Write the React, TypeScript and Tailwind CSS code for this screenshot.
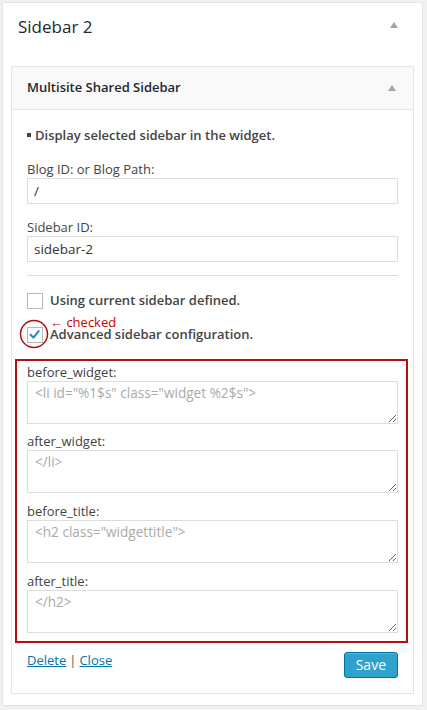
import React from 'react';

const font = { fontFamily: '"Open Sans", "Liberation Sans", sans-serif' };

const UpArrow: React.FC = () => (
  <svg width="8" height="6" viewBox="0 0 8 6" className="block">
    <polygon points="4,0 8,6 0,6" fill="#a0a5aa" />
  </svg>
);

const Field: React.FC<{ label: string; placeholder: string; gap: string }> = ({ label, placeholder, gap }) => (
  <div className={gap}>
    <label className="block text-[13px] leading-[18px] text-[#444]">{label}</label>
    <textarea
      placeholder={placeholder}
      className="block w-full h-[43px] border border-[#ddd] px-[7px] py-[1px] text-[13.6px] leading-[20px] text-[#333] placeholder:text-[#aaa] outline-none"
    />
  </div>
);

const App: React.FC = () => {
  return (
    <div className="min-h-screen bg-[#f1f1f1] pt-[2px] pl-[2px] pb-[4px]" style={font}>
      <div className="w-[421px] border border-[#e5e5e5] bg-white">
        {/* sidebar title */}
        <div className="flex items-start justify-between pl-[15px] pr-[24px] pt-[11px] h-[63px]">
          <h2 className="text-[17px] leading-[26px] text-[#23282d]">Sidebar 2</h2>
          <div className="mt-[8px]">
            <UpArrow />
          </div>
        </div>

        {/* widget */}
        <div className="mx-[8px] mb-[11px] border border-[#e5e5e5]">
          <div className="flex items-center justify-between h-[43px] bg-[#f9f9f9] border-b border-[#e5e5e5] pl-[15px] pr-[17px]">
            <h3 className="text-[13px] font-semibold text-[#23282d]">Multisite Shared Sidebar</h3>
            <UpArrow />
          </div>

          <div className="px-[15px] pt-[15px] pb-[15px]">
            <p className="text-[13px] leading-[20px] font-semibold text-[#444] flex items-center">
              <span className="inline-block w-[4px] h-[4px] bg-[#444] mr-[4px]" />
              Display selected sidebar in the widget.
            </p>

            <label className="block mt-[16px] text-[13px] leading-[17px] text-[#444]">Blog ID: or Blog Path:</label>
            <input
              defaultValue="/"
              className="block w-full h-[26px] border border-[#ddd] px-[6px] text-[13.5px] text-[#333] outline-none"
            />

            <label className="block mt-[15px] text-[13px] leading-[17px] text-[#444]">Sidebar ID:</label>
            <input
              defaultValue="sidebar-2"
              className="block w-full h-[26px] border border-[#ddd] px-[6px] text-[13.5px] text-[#333] outline-none"
            />

            <div className="mt-[13px] border-t border-[#ddd]" />

            <div className="mt-[16px] flex items-center h-[17px]">
              <span className="w-[16px] h-[16px] border border-[#b4b9be] bg-white" />
              <span className="ml-[7px] text-[13px] font-semibold text-[#444]">Using current sidebar defined.</span>
            </div>

            <div className="relative mt-[17px] flex items-center h-[17px]">
              <span className="relative w-[16px] h-[16px] border border-[#b4b9be] bg-white">
                <svg viewBox="0 0 16 16" className="absolute left-[0px] top-[0px] w-[14px] h-[14px]">
                  <path d="M3 7.8 L6.2 11 L12.2 3.6" stroke="#1e8cbe" strokeWidth="2.4" fill="none" strokeLinecap="round" strokeLinejoin="round" />
                </svg>
              </span>
              <span className="ml-[7px] text-[13px] font-semibold text-[#444]">Advanced sidebar configuration.</span>
              {/* annotation */}
              <svg width="32" height="32" viewBox="0 0 32 32" className="absolute left-[-8px] top-[-7px] pointer-events-none">
                <circle cx="15" cy="15" r="13.5" stroke="#b40d12" strokeWidth="1.5" fill="none" />
              </svg>
              <span className="absolute left-[23px] top-[-11px] text-[13px] leading-[14px] text-[#c00]">← checked</span>
            </div>

            <div className="mt-[16px] -ml-[12px] -mr-[10px] border-2 border-[#b40d12] pl-[10px] pr-[8px] pb-[8px]">
              <Field gap="pt-[2px]" label="before_widget:" placeholder={'<li id="%1$s" class="widget %2$s">'} />
              <Field gap="mt-[8px]" label="after_widget:" placeholder="</li>" />
              <Field gap="mt-[9px]" label="before_title:" placeholder={'<h2 class="widgettitle">'} />
              <Field gap="mt-[9px]" label="after_title:" placeholder="</h2>" />
            </div>

            <div className="mt-[9px] flex items-start justify-between">
              <div className="text-[13px] leading-[16px] text-[#555]">
                <a href="#" className="text-[#0073aa] underline">Delete</a>
                <span className="mx-[3px]">|</span>
                <a href="#" className="text-[#0073aa] underline">Close</a>
              </div>
              <button className="h-[26px] px-[11px] rounded-[3px] bg-[#2ea2cc] border border-[#0074a2] text-white text-[14px] leading-[24px] shadow-[inset_0_1px_0_rgba(120,200,230,0.5)]">
                Save
              </button>
            </div>
          </div>
        </div>
      </div>
    </div>
  );
};

export default App;
